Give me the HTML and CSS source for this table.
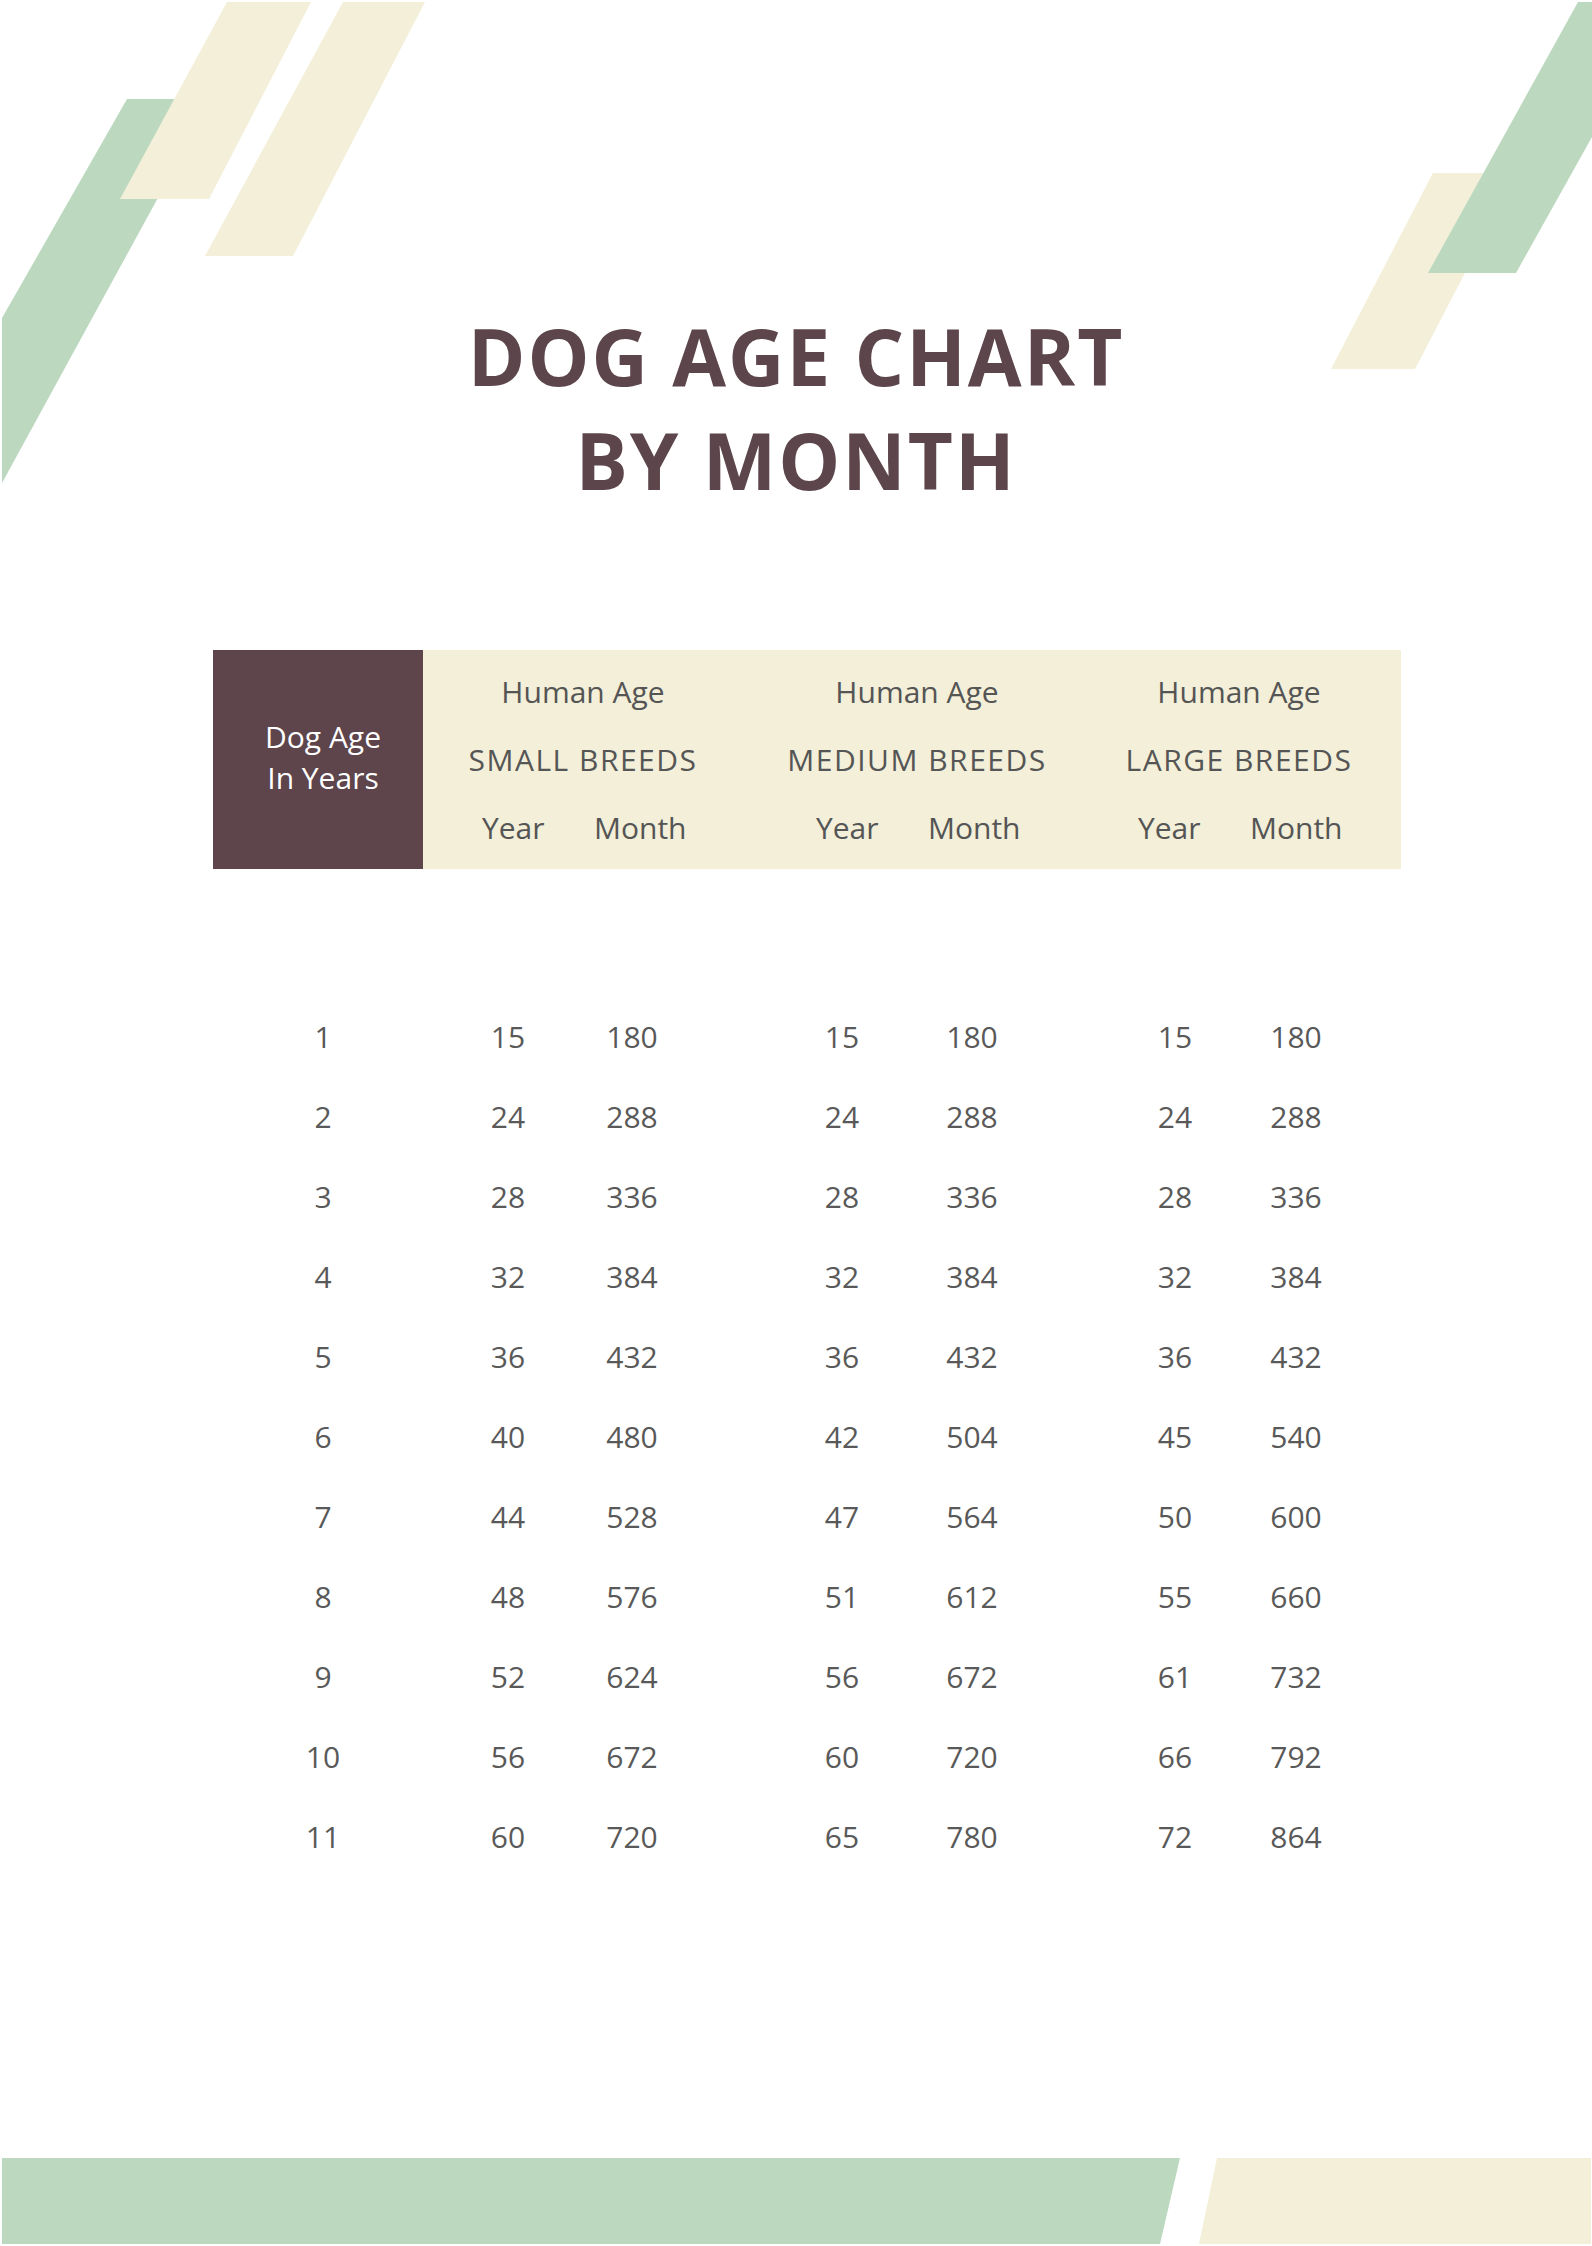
FILE: index.html
```html
<!DOCTYPE html>
<html lang="en">
<head>
<meta charset="utf-8">
<title>Dog Age Chart by Month</title>
<link rel="stylesheet" href="styles.css">
</head>
<body>
<div class="page">
  <svg class="deco" width="1592" height="2246" viewBox="0 0 1592 2246" aria-hidden="true">
    <polygon class="green" points="127,99 212,99 2,483 2,318"/>
    <polygon class="cream" points="227,2 311,2 209,199 120,199"/>
    <polygon class="cream" points="343,2 425,2 293,256 205,256"/>
    <polygon class="cream" points="1433,173 1517,173 1415,369 1331,369"/>
    <polygon class="green" points="1578,2 1592,2 1592,137 1516,273 1428,273"/>
    <polygon class="green" points="2,2158 1180,2158 1160,2244 2,2244"/>
    <polygon class="cream" points="1217,2158 1591,2158 1591,2244 1199,2244"/>
  </svg>

  <main class="content">
    <h1 class="title">DOG AGE CHART<br>BY MONTH</h1>

    <section class="chart">
      <div class="chart-head">
        <div class="head-dog">Dog Age<br>In Years</div>
        <div class="head-group">
          <div class="hl">Human Age</div>
          <div class="hl breed">SMALL BREEDS</div>
          <div class="pair"><span class="yr">Year</span><span class="mo">Month</span></div>
        </div>
        <div class="head-group">
          <div class="hl">Human Age</div>
          <div class="hl breed">MEDIUM BREEDS</div>
          <div class="pair"><span class="yr">Year</span><span class="mo">Month</span></div>
        </div>
        <div class="head-group">
          <div class="hl">Human Age</div>
          <div class="hl breed">LARGE BREEDS</div>
          <div class="pair"><span class="yr">Year</span><span class="mo">Month</span></div>
        </div>
      </div>

      <div class="chart-body">
        <div class="row"><div class="dog">1</div><div class="cells s"><span>15</span><span>180</span></div><div class="cells m"><span>15</span><span>180</span></div><div class="cells l"><span>15</span><span>180</span></div></div>
        <div class="row"><div class="dog">2</div><div class="cells s"><span>24</span><span>288</span></div><div class="cells m"><span>24</span><span>288</span></div><div class="cells l"><span>24</span><span>288</span></div></div>
        <div class="row"><div class="dog">3</div><div class="cells s"><span>28</span><span>336</span></div><div class="cells m"><span>28</span><span>336</span></div><div class="cells l"><span>28</span><span>336</span></div></div>
        <div class="row"><div class="dog">4</div><div class="cells s"><span>32</span><span>384</span></div><div class="cells m"><span>32</span><span>384</span></div><div class="cells l"><span>32</span><span>384</span></div></div>
        <div class="row"><div class="dog">5</div><div class="cells s"><span>36</span><span>432</span></div><div class="cells m"><span>36</span><span>432</span></div><div class="cells l"><span>36</span><span>432</span></div></div>
        <div class="row"><div class="dog">6</div><div class="cells s"><span>40</span><span>480</span></div><div class="cells m"><span>42</span><span>504</span></div><div class="cells l"><span>45</span><span>540</span></div></div>
        <div class="row"><div class="dog">7</div><div class="cells s"><span>44</span><span>528</span></div><div class="cells m"><span>47</span><span>564</span></div><div class="cells l"><span>50</span><span>600</span></div></div>
        <div class="row"><div class="dog">8</div><div class="cells s"><span>48</span><span>576</span></div><div class="cells m"><span>51</span><span>612</span></div><div class="cells l"><span>55</span><span>660</span></div></div>
        <div class="row"><div class="dog">9</div><div class="cells s"><span>52</span><span>624</span></div><div class="cells m"><span>56</span><span>672</span></div><div class="cells l"><span>61</span><span>732</span></div></div>
        <div class="row"><div class="dog">10</div><div class="cells s"><span>56</span><span>672</span></div><div class="cells m"><span>60</span><span>720</span></div><div class="cells l"><span>66</span><span>792</span></div></div>
        <div class="row"><div class="dog">11</div><div class="cells s"><span>60</span><span>720</span></div><div class="cells m"><span>65</span><span>780</span></div><div class="cells l"><span>72</span><span>864</span></div></div>
      </div>
    </section>
  </main>
</div>
</body>
</html>
```

FILE: styles.css
```css
* {
  box-sizing: border-box;
}

html, body {
  margin: 0;
  padding: 0;
  background: #ffffff;
}

body {
  font-family: "Open Sans", "Noto Sans", Arial, sans-serif;
  color: #555555;
}

.page {
  position: relative;
  width: 1592px;
  height: 2246px;
  overflow: hidden;
  background: #ffffff;
}

.deco {
  position: absolute;
  left: 0;
  top: 0;
  z-index: 0;
}

.green {
  fill: #bcd9bf;
}

.cream {
  fill: #f3efd8;
}

.content {
  position: relative;
  z-index: 1;
  padding-top: 304px;
}

.title {
  margin: 0;
  text-align: center;
  font-size: 78px;
  line-height: 104px;
  font-weight: 700;
  letter-spacing: 2px;
  color: #5c464c;
}

.chart {
  margin: 138px 0 0 213px;
  width: 1188px;
}

.chart-head {
  display: grid;
  grid-template-columns: 210px 320px 348px 296px 14px;
  background: #f3efd8;
  height: 219px;
}

.head-dog {
  grid-column: 1;
  background: #5d454b;
  color: #ffffff;
  display: flex;
  align-items: center;
  justify-content: center;
  text-align: center;
  padding: 0 0 6px 10px;
  font-size: 30px;
  line-height: 41px;
}

.head-group {
  padding-top: 8px;
  display: flex;
  flex-direction: column;
  align-items: center;
  font-size: 30px;
  line-height: 68px;
  color: #555555;
}

.hl {
  white-space: nowrap;
}

.breed {
  letter-spacing: 1.5px;
}

.pair {
  display: flex;
  justify-content: center;
  gap: 52px;
}

.yr {
  width: 60px;
  text-align: center;
}

.mo {
  width: 90px;
  text-align: center;
}

.chart-body {
  margin-top: 128px;
}

.row {
  display: flex;
  height: 80px;
  font-size: 30px;
  line-height: 80px;
  color: #595959;
}

.dog {
  width: 220px;
  text-align: center;
}

.cells {
  display: flex;
}

.cells span {
  width: 80px;
  text-align: center;
}

.cells.s {
  margin-left: 35px;
  gap: 44px;
}

.cells.m {
  margin-left: 130px;
  gap: 50px;
}

.cells.l {
  margin-left: 123px;
  gap: 41px;
}
```
